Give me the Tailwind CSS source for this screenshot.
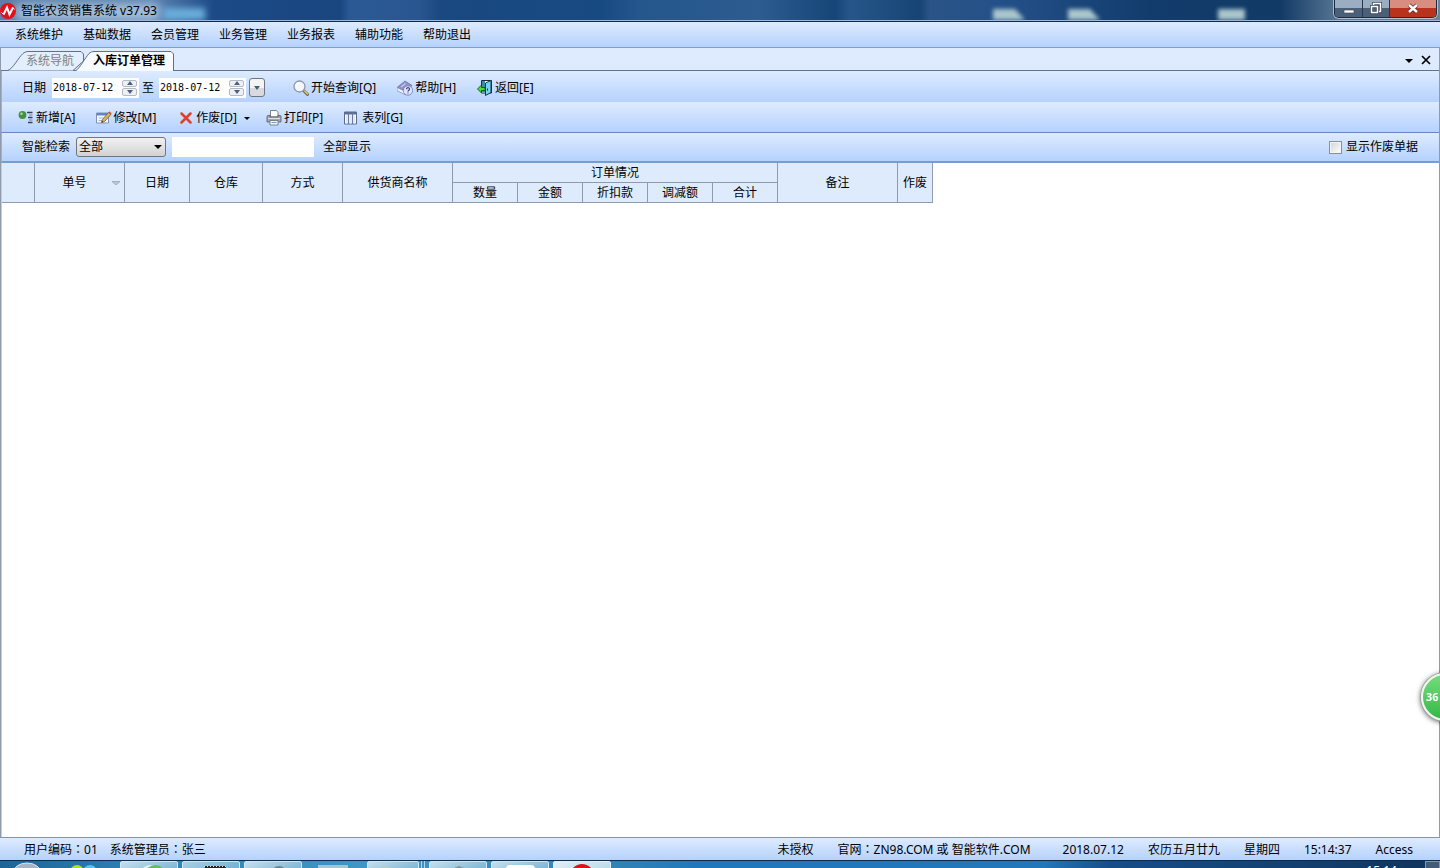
<!DOCTYPE html>
<html lang="zh-CN">
<head>
  <meta charset="UTF-8" />
  <meta name="viewport" content="width=device-width, initial-scale=1" />
  <title>智能农资销售系统 v37.93</title>
  <script src="https://cdn.jsdelivr.net/npm/@tailwindcss/browser@4"></script>
</head>
<body class="flex h-screen flex-col overflow-hidden bg-white font-['Noto_Sans','Noto_Sans_CJK_SC',sans-serif] text-[12px] leading-4 text-black">

  <!-- Title bar -->
  <header class="relative flex h-[22px] shrink-0 items-start justify-between overflow-hidden border-b border-[#12294a] bg-[linear-gradient(90deg,#5c7fa8_0px,#5f86b3_150px,#1b4a86_215px,#1a4680_340px,#2a5a94_350px,#2a5690_420px,#1a4880_440px,#184a82_600px,#25568c_640px,#2c5c90_760px,#164678_835px,#26568a_850px,#164474_920px,#2a5486_930px,#24508a_1000px,#123c6c_1150px,#123a66_1280px,#5a7894_1340px,#6c8298_100%)]">
    <div class="absolute left-4 top-1 h-4 w-36 bg-[#b8cfe6] opacity-80 blur-[5px]"></div>
    <div class="absolute left-[163px] top-[8px] h-3 w-[42px] bg-[#6aaedc] blur-[3px]"></div>
    <svg class="absolute left-[990px] top-0 h-5 w-[260px] blur-[2px]" viewBox="0 0 260 20" aria-hidden="true">
      <path d="M3 9h22l10 11H3zM78 9h22l10 11H78zM228 9h27v11h-27z" fill="#a9c6cc" />
    </svg>
    <div class="absolute inset-x-0 bottom-0 h-px bg-[#9db8d8]"></div>
    <div class="relative flex items-center gap-[5px] pt-[3px]">
      <svg class="h-4 w-4" viewBox="0 0 16 16" aria-hidden="true">
        <circle cx="8" cy="8" r="8" fill="#e3101c" />
        <path d="M3.500 11.500L7 4.500l2.500 7L13 4.500" fill="none" stroke="#fff" stroke-width="2" />
        <path d="M1.500 9.500l2 2M13 4.500l1.500 2" fill="none" stroke="#fff" />
      </svg>
      <h1>智能农资销售系统 v37.93</h1>
    </div>
    <div class="relative mr-[3px] flex h-[18px] overflow-hidden rounded-b-[5px] border border-t-0 border-[#1d2c40] text-white ring-1 ring-white/50">
      <button type="button" aria-label="最小化" class="flex w-[28px] items-center justify-center border-r border-[#27384e] bg-linear-to-b from-[#9badc0] from-50% to-[#4b6078] to-50%">
        <svg class="h-4 w-4" viewBox="0 0 16 16"><path d="M3 9h10v3H3z" fill="#fff" stroke="#47525f" stroke-width=".7" /></svg>
      </button>
      <button type="button" aria-label="还原" class="flex w-[27px] items-center justify-center border-r border-[#27384e] bg-linear-to-b from-[#9badc0] from-50% to-[#4b6078] to-50%">
        <svg class="h-4 w-4" viewBox="0 0 16 16" fill="none"><path d="M5.500 4V2.500h7v8H11M3.500 5.500h6v6h-6z" stroke="#3c4754" stroke-width="3" /><path d="M5.500 4V2.500h7v8H11M3.500 5.500h6v6h-6z" stroke="#fff" stroke-width="1.500" /></svg>
      </button>
      <button type="button" aria-label="关闭窗口" class="flex w-[46px] items-center justify-center bg-linear-to-b from-[#d98d80] from-50% to-[#b8321c] to-50%">
        <svg class="h-4 w-4" viewBox="0 0 16 16" fill="none"><path d="M4 4l8 7M12 4l-8 7" stroke="#5a2c2c" stroke-width="4" /><path d="M4 4l8 7M12 4l-8 7" stroke="#fff" stroke-width="2.500" /></svg>
      </button>
    </div>
  </header>

  <!-- Menu -->
  <nav class="flex h-[26px] shrink-0 items-center gap-5 border-b border-[#859ec4] bg-linear-to-b from-[#deebff] to-[#b5d2fd] px-[15px]">
    <button type="button">系统维护</button>
    <button type="button">基础数据</button>
    <button type="button">会员管理</button>
    <button type="button">业务管理</button>
    <button type="button">业务报表</button>
    <button type="button">辅助功能</button>
    <button type="button">帮助退出</button>
  </nav>

  <main class="flex min-h-0 flex-1 flex-col border-l border-r border-[#8f9aab]">
    <!-- Tabs -->
    <div class="flex h-[23px] shrink-0 items-end justify-between border-b border-[#5f7395] bg-[#deebff] pl-[6px]">
      <div class="-mb-px flex h-5">
        <button type="button" class="relative h-5 w-[77px] pl-[19px] text-left text-[#808080]">
          <svg class="absolute inset-0 h-5 w-[77px]" viewBox="0 0 77 20" aria-hidden="true">
            <path d="M.500 19.500C6 18 11 7 16 2.500Q18 .500 21 .500H74L76.500 3V10L66 19.500" fill="#e4effe" stroke="#5f6f8c" />
          </svg>
          <span class="relative">系统导航</span>
        </button>
        <button type="button" class="relative -ml-[9px] h-5 w-[99px] pl-[18px] text-left font-bold">
          <svg class="absolute inset-0 h-5 w-[99px]" viewBox="0 0 99 20" aria-hidden="true">
            <path d="M.500 20C5 17 10 7 14 2.500Q16 .500 19 .500H96L98.500 3V20" fill="#f7faff" stroke="#5f6f8c" />
          </svg>
          <span class="relative">入库订单管理</span>
        </button>
      </div>
      <div class="flex h-full items-center gap-2 pr-2 pt-[2px]">
        <button type="button" aria-label="窗口列表"><svg class="h-2 w-2" viewBox="0 0 8 8"><path d="M0 3h8L4 7z" /></svg></button>
        <button type="button" aria-label="关闭"><svg class="h-[10px] w-[10px]" viewBox="0 0 10 10"><path d="M1 1l8 8M9 1L1 9" stroke="#000" stroke-width="1.700" /></svg></button>
      </div>
    </div>

    <!-- Query toolbar -->
    <div class="flex h-[31px] shrink-0 items-center border-l border-[#8fb4e8] bg-linear-to-b from-[#deebff] to-[#b5d2fd] pl-5 pt-[2px]">
      <label for="dateFrom">日期</label>
      <div class="ml-[6px] flex h-5 w-[87px] items-center bg-white pr-[2px]">
        <input id="dateFrom" type="text" value="2018-07-12" class="w-[70px] pl-px font-['DejaVu_Sans_Mono',monospace] text-[10px] outline-none" />
        <div class="flex h-4 w-[15px] flex-col gap-px">
          <button type="button" aria-label="增加" class="flex flex-1 items-center justify-center rounded-[2px] border border-[#b4bac4] bg-[#eef0f4]"><svg class="h-1 w-[6px]" viewBox="0 0 6 4"><path d="M0 4h6L3 0z" fill="#4f5f84" /></svg></button>
          <button type="button" aria-label="减少" class="flex flex-1 items-center justify-center rounded-[2px] border border-[#b4bac4] bg-[#eef0f4]"><svg class="h-1 w-[6px]" viewBox="0 0 6 4"><path d="M0 0h6L3 4z" fill="#4f5f84" /></svg></button>
        </div>
      </div>
      <label for="dateTo" class="ml-[3px]">至</label>
      <div class="ml-[5px] flex h-5 w-[87px] items-center bg-white pr-[2px]">
        <input id="dateTo" type="text" value="2018-07-12" class="w-[70px] pl-px font-['DejaVu_Sans_Mono',monospace] text-[10px] outline-none" />
        <div class="flex h-4 w-[15px] flex-col gap-px">
          <button type="button" aria-label="增加" class="flex flex-1 items-center justify-center rounded-[2px] border border-[#b4bac4] bg-[#eef0f4]"><svg class="h-1 w-[6px]" viewBox="0 0 6 4"><path d="M0 4h6L3 0z" fill="#4f5f84" /></svg></button>
          <button type="button" aria-label="减少" class="flex flex-1 items-center justify-center rounded-[2px] border border-[#b4bac4] bg-[#eef0f4]"><svg class="h-1 w-[6px]" viewBox="0 0 6 4"><path d="M0 0h6L3 4z" fill="#4f5f84" /></svg></button>
        </div>
      </div>
      <button type="button" aria-label="日期选项" class="ml-[3px] flex h-[19px] w-4 items-center justify-center rounded-[3px] border border-[#70757e] bg-linear-to-b from-[#f4f4f4] from-50% to-[#d8dade] to-50%">
        <svg class="h-1 w-[6px]" viewBox="0 0 6 4"><path d="M0 0h6L3 4z" fill="#3f6079" /></svg>
      </button>
      <div class="ml-7 flex items-center gap-[21px]">
        <button type="button" class="flex items-center gap-[2px]">
          <svg class="h-4 w-4" viewBox="0 0 16 16">
            <path d="M10.500 10.500l4 4" stroke="#6e6750" stroke-width="3" stroke-linecap="round" />
            <path d="M11.500 11l3 3" stroke="#e2c35c" stroke-width="1.500" stroke-linecap="round" />
            <circle cx="6.500" cy="6.500" r="5.500" fill="#f3f7fd" stroke="#8e97a6" stroke-width="1.300" />
            <path d="M3 6.500a3.500 3.500 0 0 1 3.500-3.500" fill="none" stroke="#fff" stroke-width="2" />
          </svg>
          <span>开始查询[Q]</span>
        </button>
        <button type="button" class="flex items-center gap-[2px]">
          <svg class="h-4 w-4" viewBox="0 0 16 16">
            <path d="M0 7.500L8 1l7 4.500L8.500 12z" fill="#8e92c4" stroke="#686c9e" stroke-width=".7" />
            <path d="M0 7.500v3L8.500 15l3-3-3-.5z" fill="#f3f4fb" stroke="#7c80ae" stroke-width=".7" />
            <path d="M4 7l4.500-3.500" stroke="#c4c6e6" stroke-width="1.500" />
            <circle cx="11" cy="10.500" r="4.700" fill="#dfe6fa" stroke="#7079b4" stroke-width=".8" />
            <path d="M9.500 9.300c0-2.300 3.300-2 3 0-.2 1-1.500 1-1.500 2.200M11 12.400v1.200" fill="none" stroke="#3c469c" stroke-width="1.200" />
          </svg>
          <span>帮助[H]</span>
        </button>
        <button type="button" class="flex items-center gap-[2px]">
          <svg class="h-4 w-4" viewBox="0 0 16 16">
            <path d="M4.500.500h10v12.500h-10z" fill="#fff" stroke="#1d2b38" />
            <path d="M5 1h3v11H5z" fill="#3d8cae" />
            <path d="M8.500 3l5.500-2.500v12L8.500 15.500z" fill="#74d2f6" stroke="#12384c" />
            <path d="M10.500 8.500v2" stroke="#123" />
            <path d="M.500 9l4-4v2.500h3.500v3H4.500V13z" fill="#4bdc3e" stroke="#0b5a14" stroke-width=".9" />
          </svg>
          <span>返回[E]</span>
        </button>
      </div>
    </div>

    <!-- Edit toolbar -->
    <div class="flex h-[31px] shrink-0 items-center border-b border-l border-b-[#6488bf] border-l-[#8fb4e8] bg-linear-to-b from-[#deebff] to-[#b5d2fd] pl-4 pt-[2px]">
      <button type="button" class="flex items-center gap-[2px]">
        <svg class="h-4 w-4" viewBox="0 0 16 16">
          <circle cx="4.500" cy="5" r="3.900" fill="#419342" />
          <circle cx="3.500" cy="3.800" r="1.300" fill="#a7d99c" />
          <path d="M9 2.500h5.500M10 7.500h4.500M10 12.500h4.500" stroke="#34405c" stroke-width="1.500" />
          <path d="M11 5h3.500M11 10h3.500" stroke="#737e98" />
        </svg>
        <span>新增[A]</span>
      </button>
      <button type="button" class="ml-5 flex items-center gap-[2px]">
        <svg class="h-4 w-4" viewBox="0 0 16 16">
          <path d="M.500 3h12v10h-12z" fill="#f7faff" stroke="#8092b2" />
          <path d="M1 3h11v2.500H1z" fill="#5f86c8" />
          <path d="M2.500 8h5M2.500 10.500h4" stroke="#a6b2c8" />
          <path d="M5.500 12.500l1-3 6-7 2.500 2-6.500 7z" fill="#dcb35d" stroke="#6d5b3c" stroke-width=".8" />
          <path d="M12.500 2.500l1-1.200 2.200 1.900-1 1.300z" fill="#cf5a4e" />
          <path d="M5.500 12.500l.6-1.600 1.100 1z" fill="#222" />
        </svg>
        <span>修改[M]</span>
      </button>
      <button type="button" class="ml-6 flex items-center gap-1">
        <svg class="h-3 w-3" viewBox="0 0 12 12"><path d="M1.500 1.500l9 9M10.500 1.500l-9 9" stroke="#e23f2c" stroke-width="2.500" stroke-linecap="round" /></svg>
        <span>作废[D]</span>
        <svg class="ml-[3px] h-[3px] w-[6px]" viewBox="0 0 6 3"><path d="M0 0h6L3 3z" /></svg>
      </button>
      <button type="button" class="ml-4 flex items-center gap-[2px]">
        <svg class="h-4 w-4" viewBox="0 0 16 16">
          <path d="M4.500.500h6l1.500 2V7H4.500z" fill="#fff" stroke="#7c828c" />
          <path d="M1 6.500Q1 5.500 2 5.500h2V7h8V5.500h2q1 0 1 1V12H1z" fill="#a3a8b0" stroke="#565c68" stroke-width=".8" />
          <path d="M2 8.500h12" stroke="#dfe2e6" />
          <path d="M4 10.500h8v4.500H4z" fill="#f4f8ff" stroke="#656d79" stroke-width=".8" />
          <path d="M5.500 12.500h5" stroke="#729ad4" />
          <path d="M12.500 7h1.300" stroke="#4ab04a" />
        </svg>
        <span>打印[P]</span>
      </button>
      <button type="button" class="ml-[21px] flex items-center gap-1">
        <svg class="h-[14px] w-[14px]" viewBox="0 0 14 14">
          <path d="M.500 1h12v12H.500z" fill="#fff" stroke="#5b6986" />
          <path d="M0 1h13v2.500H0z" fill="#5e6d90" />
          <path d="M4.500 2v11M8.500 2v11" stroke="#6d7c9c" stroke-width="1.300" />
          <path d="M2.500 4.500v8M6.500 4.500v8M10.500 4.500v8" stroke="#dce7f8" stroke-width="1.500" />
        </svg>
        <span>表列[G]</span>
      </button>
    </div>

    <!-- Search -->
    <div class="flex h-[30px] shrink-0 items-center border-b-2 border-l border-b-[#759dd0] border-l-[#8fb4e8] bg-linear-to-b from-[#deebff] to-[#b5d2fd] pl-5 pr-[21px]">
      <label for="searchField">智能检索</label>
      <div class="relative ml-[6px]">
        <select id="searchField" class="block h-5 w-[90px] appearance-none rounded-[3px] border border-[#70757e] bg-linear-to-b from-[#f2f2f2] to-[#d2d2d2] pl-[2px]">
          <option>全部</option>
        </select>
        <svg class="pointer-events-none absolute right-1 top-2 h-1 w-2" viewBox="0 0 8 4" aria-hidden="true"><path d="M0 0h8L4 4z" /></svg>
      </div>
      <input type="text" aria-label="检索内容" class="ml-[6px] h-5 w-[142px] bg-white px-1 outline-none" />
      <button type="button" class="ml-[9px]">全部显示</button>
      <label class="ml-auto flex items-center gap-1">
        <input type="checkbox" class="h-[13px] w-[13px] appearance-none border border-[#8a8f96] bg-linear-to-br from-[#cfd3d8] to-white shadow-[inset_0_0_0_1px_#f4f4f4]" />
        显示作废单据
      </label>
    </div>

    <!-- Orders -->
    <div class="min-h-0 flex-1 overflow-hidden border-l border-[#c5cddb]">
      <table class="w-[931px] table-fixed border-separate border-spacing-0 [&_th]:border-b [&_th]:border-r [&_th]:border-[#8d9aaf] [&_th]:bg-[#deebfc] [&_th]:p-0 [&_th]:font-normal">
        <colgroup>
          <col class="w-[33px]" />
          <col class="w-[90px]" />
          <col class="w-[65px]" />
          <col class="w-[73px]" />
          <col class="w-[80px]" />
          <col class="w-[110px]" />
          <col class="w-[65px]" />
          <col class="w-[65px]" />
          <col class="w-[65px]" />
          <col class="w-[65px]" />
          <col class="w-[65px]" />
          <col class="w-[120px]" />
          <col class="w-[35px]" />
        </colgroup>
        <thead>
          <tr class="h-5">
            <th rowspan="2"></th>
            <th rowspan="2">
              <div class="flex items-center pr-1">
                <span class="flex-1 pl-[2px]">单号</span>
                <svg class="h-1 w-2" viewBox="0 0 8 4" aria-hidden="true"><path d="M0 .500h8L4 4z" fill="#b9c8dc" stroke="#8da0ba" stroke-width=".7" /></svg>
              </div>
            </th>
            <th rowspan="2">日期</th>
            <th rowspan="2">仓库</th>
            <th rowspan="2">方式</th>
            <th rowspan="2">供货商名称</th>
            <th colspan="5">订单情况</th>
            <th rowspan="2">备注</th>
            <th rowspan="2">作废</th>
          </tr>
          <tr class="h-5">
            <th>数量</th>
            <th>金额</th>
            <th>折扣款</th>
            <th>调减额</th>
            <th>合计</th>
          </tr>
        </thead>
        <tbody></tbody>
      </table>
    </div>
  </main>

  <!-- Status bar -->
  <footer class="flex h-[23px] shrink-0 items-center justify-between border-t border-[#8795ab] bg-linear-to-b from-[#deebff] to-[#b5d2fd] pl-6 pr-[27px] pt-[2px]">
    <div class="flex gap-3">
      <span>用户编码<span lang="zh-TW" class="font-['Noto_Sans_CJK_TC',sans-serif] leading-none">：</span>01</span>
      <span>系统管理员<span lang="zh-TW" class="font-['Noto_Sans_CJK_TC',sans-serif] leading-none">：</span>张三</span>
    </div>
    <div class="flex gap-6">
      <span>未授权</span>
      <span class="min-w-[201px]">官网<span lang="zh-TW" class="font-['Noto_Sans_CJK_TC',sans-serif] leading-none">：</span>ZN98.COM 或 智能软件.COM</span>
      <span>2018.07.12</span>
      <span>农历五月廿九</span>
      <span>星期四</span>
      <span>15:14:37</span>
      <span>Access</span>
    </div>
  </footer>

  <!-- Taskbar, mostly below the screen edge -->
  <div class="flex h-2 shrink-0 items-start overflow-hidden border-t border-[#0c2c4c] bg-[linear-gradient(90deg,#1d6496_0px,#2b7db0_120px,#3f97c4_360px,#3283b4_610px,#1f78bc_700px,#2276ba_1045px,#164d88_1110px,#123f70_1300px,#10345c_100%)]">
    <svg class="h-[7px] w-[120px]" viewBox="0 0 120 7" aria-hidden="true">
      <ellipse cx="27" cy="12" rx="14" ry="10" fill="#a5b5c6" stroke="#dbe5ee" />
      <circle cx="77" cy="11" r="7" fill="#b2e01e" />
      <circle cx="90" cy="11" r="7" fill="#52c8f0" />
    </svg>
    <div class="flex gap-1">
      <button type="button" aria-label="浏览器" class="h-7 w-[58px] rounded-t-[2px] border border-[#d0e6f2] bg-linear-to-br from-[#c4dfec] to-[#4d9ec6]">
        <svg class="h-[26px] w-14" viewBox="0 0 56 26"><circle cx="29" cy="13" r="10" fill="#e4f0f3" /><path d="M27 8q8-6 14 0" fill="none" stroke="#61bd62" stroke-width="4" /></svg>
      </button>
      <button type="button" aria-label="视频" class="h-7 w-[58px] rounded-t-[2px] border border-[#d0e6f2] bg-linear-to-br from-[#a8d0e4] to-[#4d9ec6]">
        <svg class="h-[26px] w-14" viewBox="0 0 56 26"><path d="M22 4h21l-3 22H19z" fill="#222" /><path d="M21 4.500h22" stroke="#ddd" stroke-dasharray="1 2" /></svg>
      </button>
      <button type="button" aria-label="搜索" class="h-7 w-[58px] rounded-t-[2px] border border-[#d0e6f2] bg-linear-to-br from-[#c4dfec] to-[#4d9ec6]">
        <svg class="h-[26px] w-14" viewBox="0 0 56 26"><circle cx="34" cy="12" r="7" fill="#98c3da" stroke="#6f8489" stroke-width="2" /></svg>
      </button>
    </div>
    <div class="ml-4 mt-1 h-4 w-[30px] bg-[#a3c5d9]"></div>
    <div class="ml-[19px] flex gap-1">
      <div class="flex gap-[2px]">
        <button type="button" aria-label="文件夹" class="h-7 w-[52px] rounded-t-[2px] border border-[#d0e6f2] bg-linear-to-br from-[#c4dfec] to-[#4d9ec6]">
          <svg class="h-[26px] w-[50px]" viewBox="0 0 50 26"><path d="M11 7q7-4 14 0v15H11z" fill="#c5ceaa" /></svg>
        </button>
        <div class="h-7 w-px bg-[#b4d6e8]"></div>
        <div class="h-7 w-px bg-[#b4d6e8]"></div>
      </div>
      <button type="button" aria-label="工具" class="h-7 w-[58px] rounded-t-[2px] border border-[#d0e6f2] bg-linear-to-br from-[#c4dfec] to-[#4d9ec6]">
        <svg class="h-[26px] w-14" viewBox="0 0 56 26"><path d="M24 6l5-2 5 2v18H24z" fill="#7e949a" /></svg>
      </button>
      <button type="button" aria-label="文档" class="h-7 w-[58px] rounded-t-[2px] border border-[#d0e6f2] bg-linear-to-br from-[#c4dfec] to-[#4d9ec6]">
        <svg class="h-[26px] w-14" viewBox="0 0 56 26"><rect x="14" y="3" width="29" height="25" rx="4" fill="#fff" /></svg>
      </button>
      <button type="button" aria-label="智能农资销售系统" class="h-7 w-[58px] rounded-t-[2px] border border-[#e2f0f6] bg-linear-to-br from-[#e2eff6] to-[#a5cee2]">
        <svg class="h-[26px] w-14" viewBox="0 0 56 26"><circle cx="28" cy="14" r="12" fill="#dc121c" /><circle cx="28" cy="14" r="7" fill="#f2d9da" /></svg>
      </button>
    </div>
    <span class="ml-auto mr-7 mt-[2px] text-white">15:14</span>
    <button type="button" aria-label="显示桌面" class="h-7 w-[15px] border border-[#8698aa] bg-[#425c78]"></button>
  </div>

  <!-- Floating 360 ball, partly past the right edge -->
  <button type="button" class="fixed -right-[29px] top-[673px] flex h-12 w-12 items-center rounded-full border-2 border-[#f1f5f1] bg-linear-to-b from-[#74dc7c] to-[#2fb945] pl-[3px] text-[11px] font-bold text-white shadow-[0_1px_5px_1px_rgba(0,0,0,0.55)] ring-1 ring-[#98a89a]">36</button>
</body>
</html>
